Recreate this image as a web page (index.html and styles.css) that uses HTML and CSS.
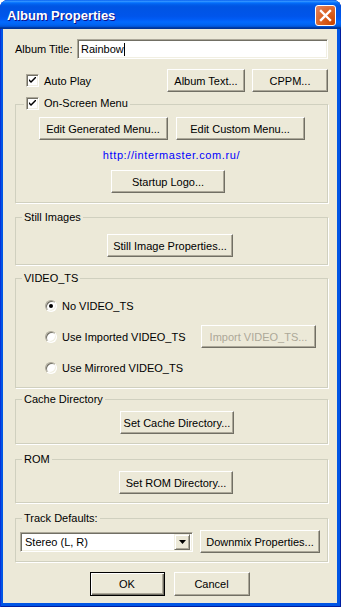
FILE: index.html
```html
<!DOCTYPE html>
<html lang="en">
<head>
    <meta charset="UTF-8">
    <title>Album Properties</title>
    <link rel="stylesheet" href="styles.css">
</head>
<body>
    <div class="window">
        <div class="titlebar">
            <span class="title">Album Properties</span>
            <button class="close" aria-label="Close">
                <svg width="13" height="13" viewBox="0 0 13 13"><path d="M2 2 L11 11 M11 2 L2 11" stroke="#fff" stroke-width="2.4" stroke-linecap="square"/></svg>
            </button>
        </div>

        <div class="client">
            <div class="row row-title">
                <span class="lbl">Album Title:</span>
                <div class="edit">Rainbow<span class="caret"></span></div>
            </div>

            <div class="row row-auto">
                <label class="check"><span class="box"><svg width="7" height="7" viewBox="0 0 7 7"><path d="M0 2 L0 4 L2 6 L7 1 L7 -1 L2 4 Z" fill="#000"/></svg></span>Auto Play</label>
                <button class="btn btn-albumtext">Album Text...</button>
                <button class="btn btn-cppm">CPPM...</button>
            </div>

            <div class="group group-menu">
                <label class="legend check"><span class="box"><svg width="7" height="7" viewBox="0 0 7 7"><path d="M0 2 L0 4 L2 6 L7 1 L7 -1 L2 4 Z" fill="#000"/></svg></span>On-Screen Menu</label>
                <div class="row row-center">
                    <button class="btn btn-menu">Edit Generated Menu...</button>
                    <button class="btn btn-menu">Edit Custom Menu...</button>
                </div>
                <div class="link">http://intermaster.com.ru/</div>
                <div class="row">
                    <button class="btn btn-dir btn-startup">Startup Logo...</button>
                </div>
            </div>

            <div class="group group-still">
                <span class="legend">Still Images</span>
                <div class="row">
                    <button class="btn btn-still">Still Image Properties...</button>
                </div>
            </div>

            <div class="group group-video">
                <span class="legend">VIDEO_TS</span>
                <div class="row radio-row">
                    <label class="radio"><span class="dot on"></span>No VIDEO_TS</label>
                </div>
                <div class="row radio-row">
                    <label class="radio"><span class="dot"></span>Use Imported VIDEO_TS</label>
                    <button class="btn btn-import" disabled>Import VIDEO_TS...</button>
                </div>
                <div class="row radio-row">
                    <label class="radio"><span class="dot"></span>Use Mirrored VIDEO_TS</label>
                </div>
            </div>

            <div class="group group-cache">
                <span class="legend">Cache Directory</span>
                <div class="row">
                    <button class="btn btn-dir btn-cache">Set Cache Directory...</button>
                </div>
            </div>

            <div class="group group-rom">
                <span class="legend">ROM</span>
                <div class="row">
                    <button class="btn btn-dir btn-rom">Set ROM Directory...</button>
                </div>
            </div>

            <div class="group group-track">
                <span class="legend">Track Defaults:</span>
                <div class="row row-track">
                    <div class="combo">
                        <span class="combo-text">Stereo (L, R)</span>
                        <span class="combo-btn"><svg width="7" height="4" viewBox="0 0 7 4"><path d="M0 0 H7 L3.5 4 Z" fill="#000"/></svg></span>
                    </div>
                    <button class="btn btn-downmix">Downmix Properties...</button>
                </div>
            </div>

            <div class="row row-buttons">
                <button class="btn btn-default btn-ok">OK</button>
                <button class="btn btn-cancel">Cancel</button>
            </div>
        </div>
    </div>
</body>
</html>
```

FILE: styles.css
```css
* {
    box-sizing: border-box;
}

body {
    margin: 0;
    background: #fff;
    font-family: 'Liberation Sans', Arial, sans-serif;
    font-size: 11px;
    color: #000;
}

.window {
    width: 341px;
    height: 607px;
    display: flex;
    flex-direction: column;
    background: #0055e5;
    border-radius: 8px 8px 0 0;
    box-shadow: inset 1px 0 #0831d9, inset -1px 0 #001ea0, inset 0 -1px #001ea0;
    overflow: hidden;
}

/* title bar */
.titlebar {
    height: 29px;
    flex: none;
    display: flex;
    align-items: center;
    padding: 0 5px 0 7px;
    background: linear-gradient(180deg, #0058ee 0%, #3593ff 4%, #288eff 6%, #127dff 8%, #036ffc 10%, #0262ee 14%, #0057e5 20%, #0054e3 24%, #0055eb 56%, #005bf5 66%, #026afe 76%, #0062ef 86%, #0052d6 92%, #0040ab 94%, #003092 100%);
}

.title {
    flex: 1;
    color: #fff;
    font-weight: bold;
    font-size: 13px;
    text-shadow: 1px 1px #0f1089;
    padding-top: 1px;
}

.close {
    width: 21px;
    height: 21px;
    margin-top: 2px;
    padding: 0;
    border: 1px solid #fff;
    border-radius: 3px;
    background: radial-gradient(circle at 90% 90%, #cc4600 0%, #dc6527 55%, #e0866a 100%);
    display: flex;
    justify-content: center;
    align-items: center;
}

/* client area */
.client {
    flex: 1;
    margin: 0 4px 4px 3px;
    padding: 10px 9px 0 12px;
    background: #ece9d8;
}

.row {
    display: flex;
    align-items: center;
}

.row-title {
    height: 20px;
}

.lbl {
    width: 62px;
}

.edit {
    width: 251px;
    height: 20px;
    background: #fff;
    border: 1px solid;
    border-color: #aca899 #fff #fff #aca899;
    box-shadow: inset 1px 1px #716f64, inset -1px -1px #f1efe2;
    padding: 2px 3px;
    line-height: 14px;
    display: flex;
    align-items: center;
}

.caret {
    width: 1px;
    height: 13px;
    background: #000;
}

.row-auto {
    height: 23px;
    margin-top: 10px;
}

/* checkbox */
.check {
    display: flex;
    align-items: center;
    gap: 5px;
    margin-left: 11px;
}

.box {
    width: 13px;
    height: 13px;
    background: #fff;
    border: 1px solid;
    border-color: #aca899 #fff #fff #aca899;
    box-shadow: inset 1px 1px #716f64, inset -1px -1px #f1efe2;
    display: flex;
    justify-content: center;
    align-items: center;
}

/* push buttons */
.btn {
    height: 23px;
    padding: 0;
    font: inherit;
    color: #000;
    background: #ece9d8;
    border: 1px solid;
    border-color: #fff #716f64 #716f64 #fff;
    box-shadow: inset -1px -1px #aca899;
}

.btn:disabled {
    color: #aca899;
}

.btn-default {
    border: 1px solid #000;
    box-shadow: inset 1px 1px #fff, inset -1px -1px #716f64, inset -2px -2px #aca899;
}

.btn-albumtext {
    width: 78px;
    margin-left: auto;
}

.btn-cppm {
    width: 76px;
    margin-left: 7px;
}

/* group boxes */
.group {
    position: relative;
    border: 1px solid #d0d0bf;
    box-shadow: 1px 1px 0 #fff;
}

.legend {
    position: absolute;
    top: -7px;
    left: 6px;
    padding: 0 2px;
    line-height: 13px;
    background: #ece9d8;
}

.legend.check {
    left: 8px;
    top: -8px;
    margin: 0;
}

.group-menu {
    height: 99px;
    margin-top: 12px;
    padding-top: 12px;
}

.row-center {
    justify-content: center;
    gap: 8px;
}

.btn-menu {
    width: 129px;
}

.link {
    margin: 9px 0 8px;
    text-align: center;
    color: #0000ff;
    letter-spacing: 0.6px;
    line-height: 13px;
}

.btn-dir {
    width: 114px;
}

.btn-startup {
    margin-left: 95px;
}

.group-still {
    height: 48px;
    margin-top: 14px;
    padding-top: 16px;
}

.btn-still {
    width: 126px;
    margin-left: 91px;
}

.group-video {
    height: 110px;
    margin-top: 13px;
    padding: 15px 11px 0 29px;
    display: flex;
    flex-direction: column;
    gap: 8px;
}

.radio-row {
    height: 23px;
}

.radio {
    display: flex;
    align-items: center;
    gap: 5px;
}

.dot {
    width: 12px;
    height: 12px;
    border-radius: 50%;
    background: #fff;
    border: 1px solid;
    border-color: #aca899 #fff #fff #aca899;
    box-shadow: inset 1px 1px #716f64, inset -1px -1px #f1efe2;
    display: flex;
    justify-content: center;
    align-items: center;
}

.dot.on::after {
    content: '';
    width: 4px;
    height: 4px;
    border-radius: 50%;
    background: #000;
}

.btn-import {
    width: 115px;
    margin-left: auto;
}

.group-cache {
    height: 45px;
    margin-top: 11px;
    padding-top: 11px;
}

.btn-cache {
    margin-left: 104px;
}

.group-rom {
    height: 44px;
    margin-top: 15px;
    padding-top: 11px;
}

.btn-rom {
    margin-left: 103px;
}

.group-track {
    height: 44px;
    margin-top: 15px;
    padding: 11px 0 0 4px;
}

.row-track {
    gap: 7px;
}

.combo {
    width: 173px;
    height: 20px;
    background: #fff;
    border: 1px solid;
    border-color: #aca899 #fff #fff #aca899;
    box-shadow: inset 1px 1px #716f64, inset -1px -1px #f1efe2;
    padding: 2px;
    display: flex;
    align-items: center;
}

.combo-text {
    flex: 1;
    padding-left: 2px;
}

.combo-btn {
    width: 16px;
    height: 16px;
    background: #ece9d8;
    border: 1px solid;
    border-color: #f1efe2 #716f64 #716f64 #f1efe2;
    box-shadow: inset 1px 1px #fff, inset -1px -1px #aca899;
    display: flex;
    justify-content: center;
    align-items: center;
}

.btn-downmix {
    width: 120px;
}

.row-buttons {
    margin-top: 10px;
    justify-content: center;
    gap: 9px;
    padding-right: 4px;
}

.btn-ok {
    width: 75px;
    height: 24px;
}

.btn-cancel {
    width: 76px;
    height: 24px;
}
```
